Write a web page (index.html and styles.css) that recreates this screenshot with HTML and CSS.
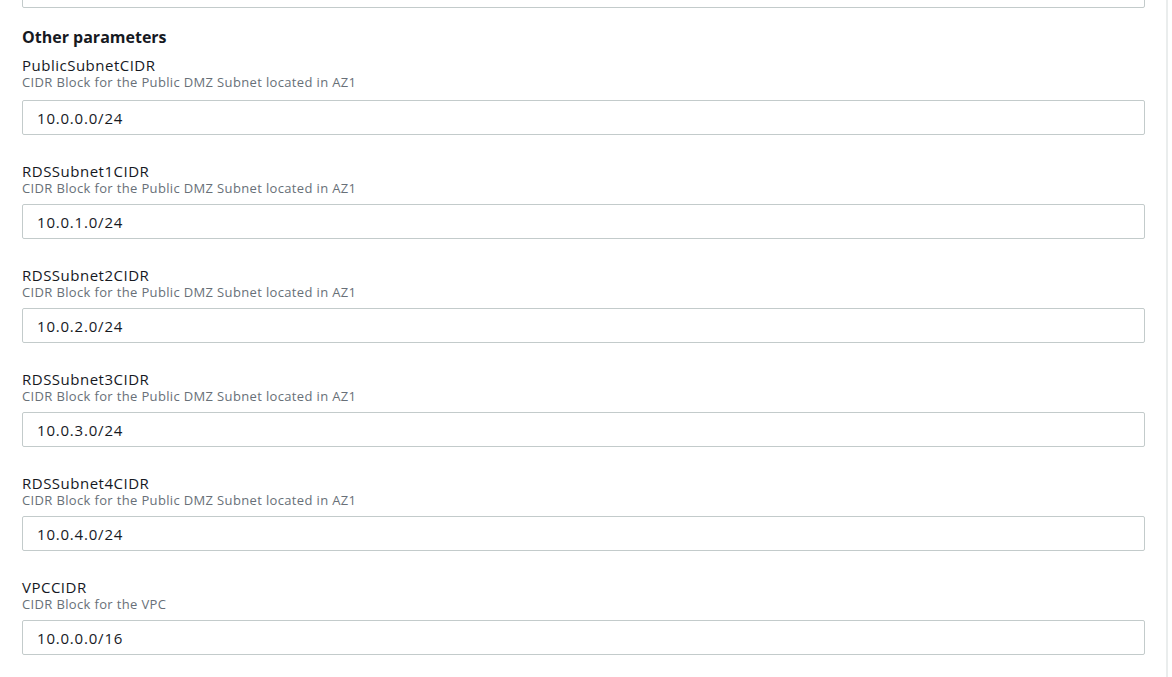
FILE: index.html
```html
<!DOCTYPE html>
<html lang="en">
<head>
<meta charset="UTF-8" />
<meta name="viewport" content="width=device-width, initial-scale=1.0" />
<title>Specify stack details</title>
<link rel="stylesheet" href="styles.css">
</head>
<body>

<div class="panel">
  <!-- tail of the previous parameter group -->
  <div class="field field-prev">
    <input class="text-input" type="text" value="">
  </div>

  <h3 class="group-title">Other parameters</h3>

  <div class="field">
    <label class="field-label">PublicSubnetCIDR</label>
    <div class="field-desc">CIDR Block for the Public DMZ Subnet located in AZ1</div>
    <input class="text-input" type="text" value="10.0.0.0/24">
  </div>

  <div class="field">
    <label class="field-label">RDSSubnet1CIDR</label>
    <div class="field-desc">CIDR Block for the Public DMZ Subnet located in AZ1</div>
    <input class="text-input" type="text" value="10.0.1.0/24">
  </div>

  <div class="field">
    <label class="field-label">RDSSubnet2CIDR</label>
    <div class="field-desc">CIDR Block for the Public DMZ Subnet located in AZ1</div>
    <input class="text-input" type="text" value="10.0.2.0/24">
  </div>

  <div class="field">
    <label class="field-label">RDSSubnet3CIDR</label>
    <div class="field-desc">CIDR Block for the Public DMZ Subnet located in AZ1</div>
    <input class="text-input" type="text" value="10.0.3.0/24">
  </div>

  <div class="field">
    <label class="field-label">RDSSubnet4CIDR</label>
    <div class="field-desc">CIDR Block for the Public DMZ Subnet located in AZ1</div>
    <input class="text-input" type="text" value="10.0.4.0/24">
  </div>

  <div class="field">
    <label class="field-label">VPCCIDR</label>
    <div class="field-desc">CIDR Block for the VPC</div>
    <input class="text-input" type="text" value="10.0.0.0/16">
  </div>
</div>

</body>
</html>
```

FILE: styles.css
```css
body{
  margin:0;
  background:#fff;
  font-family:"Open Sans",sans-serif;
  color:#16191f;
  overflow:hidden;
}

/* parameters panel */
.panel{
  display:flow-root;
  width:1123px;
  min-height:100vh;
  padding:0 21px 0 22px;
  border-right:2px solid #eaeded;
}

.group-title{
  margin:18px 0 0;
  font-size:16px;
  line-height:22px;
  font-weight:700;
}

.field{
  display:flex;flex-direction:column;
  margin-top:28px;
}
.field-prev{margin-top:-27px;}
.group-title + .field{margin-top:9px;}
.group-title + .field .field-desc{margin-bottom:10px;}

.field-label{
  font-size:15px;
  line-height:17px;
  letter-spacing:.5px;
}
.field-desc{
  margin:0 0 8px;
  font-size:13px;
  line-height:16px;
  letter-spacing:.35px;
  color:#687078;
}

.text-input{
  box-sizing:border-box;
  width:100%;
  height:35px;
  margin:0;
  padding:0 14px;
  border:1px solid #c3cbcb;
  border-radius:2px;
  font-family:inherit;
  font-size:15px;
  letter-spacing:.8px;
  color:#16191f;
  background:#fff;
  outline:none;
}
```
